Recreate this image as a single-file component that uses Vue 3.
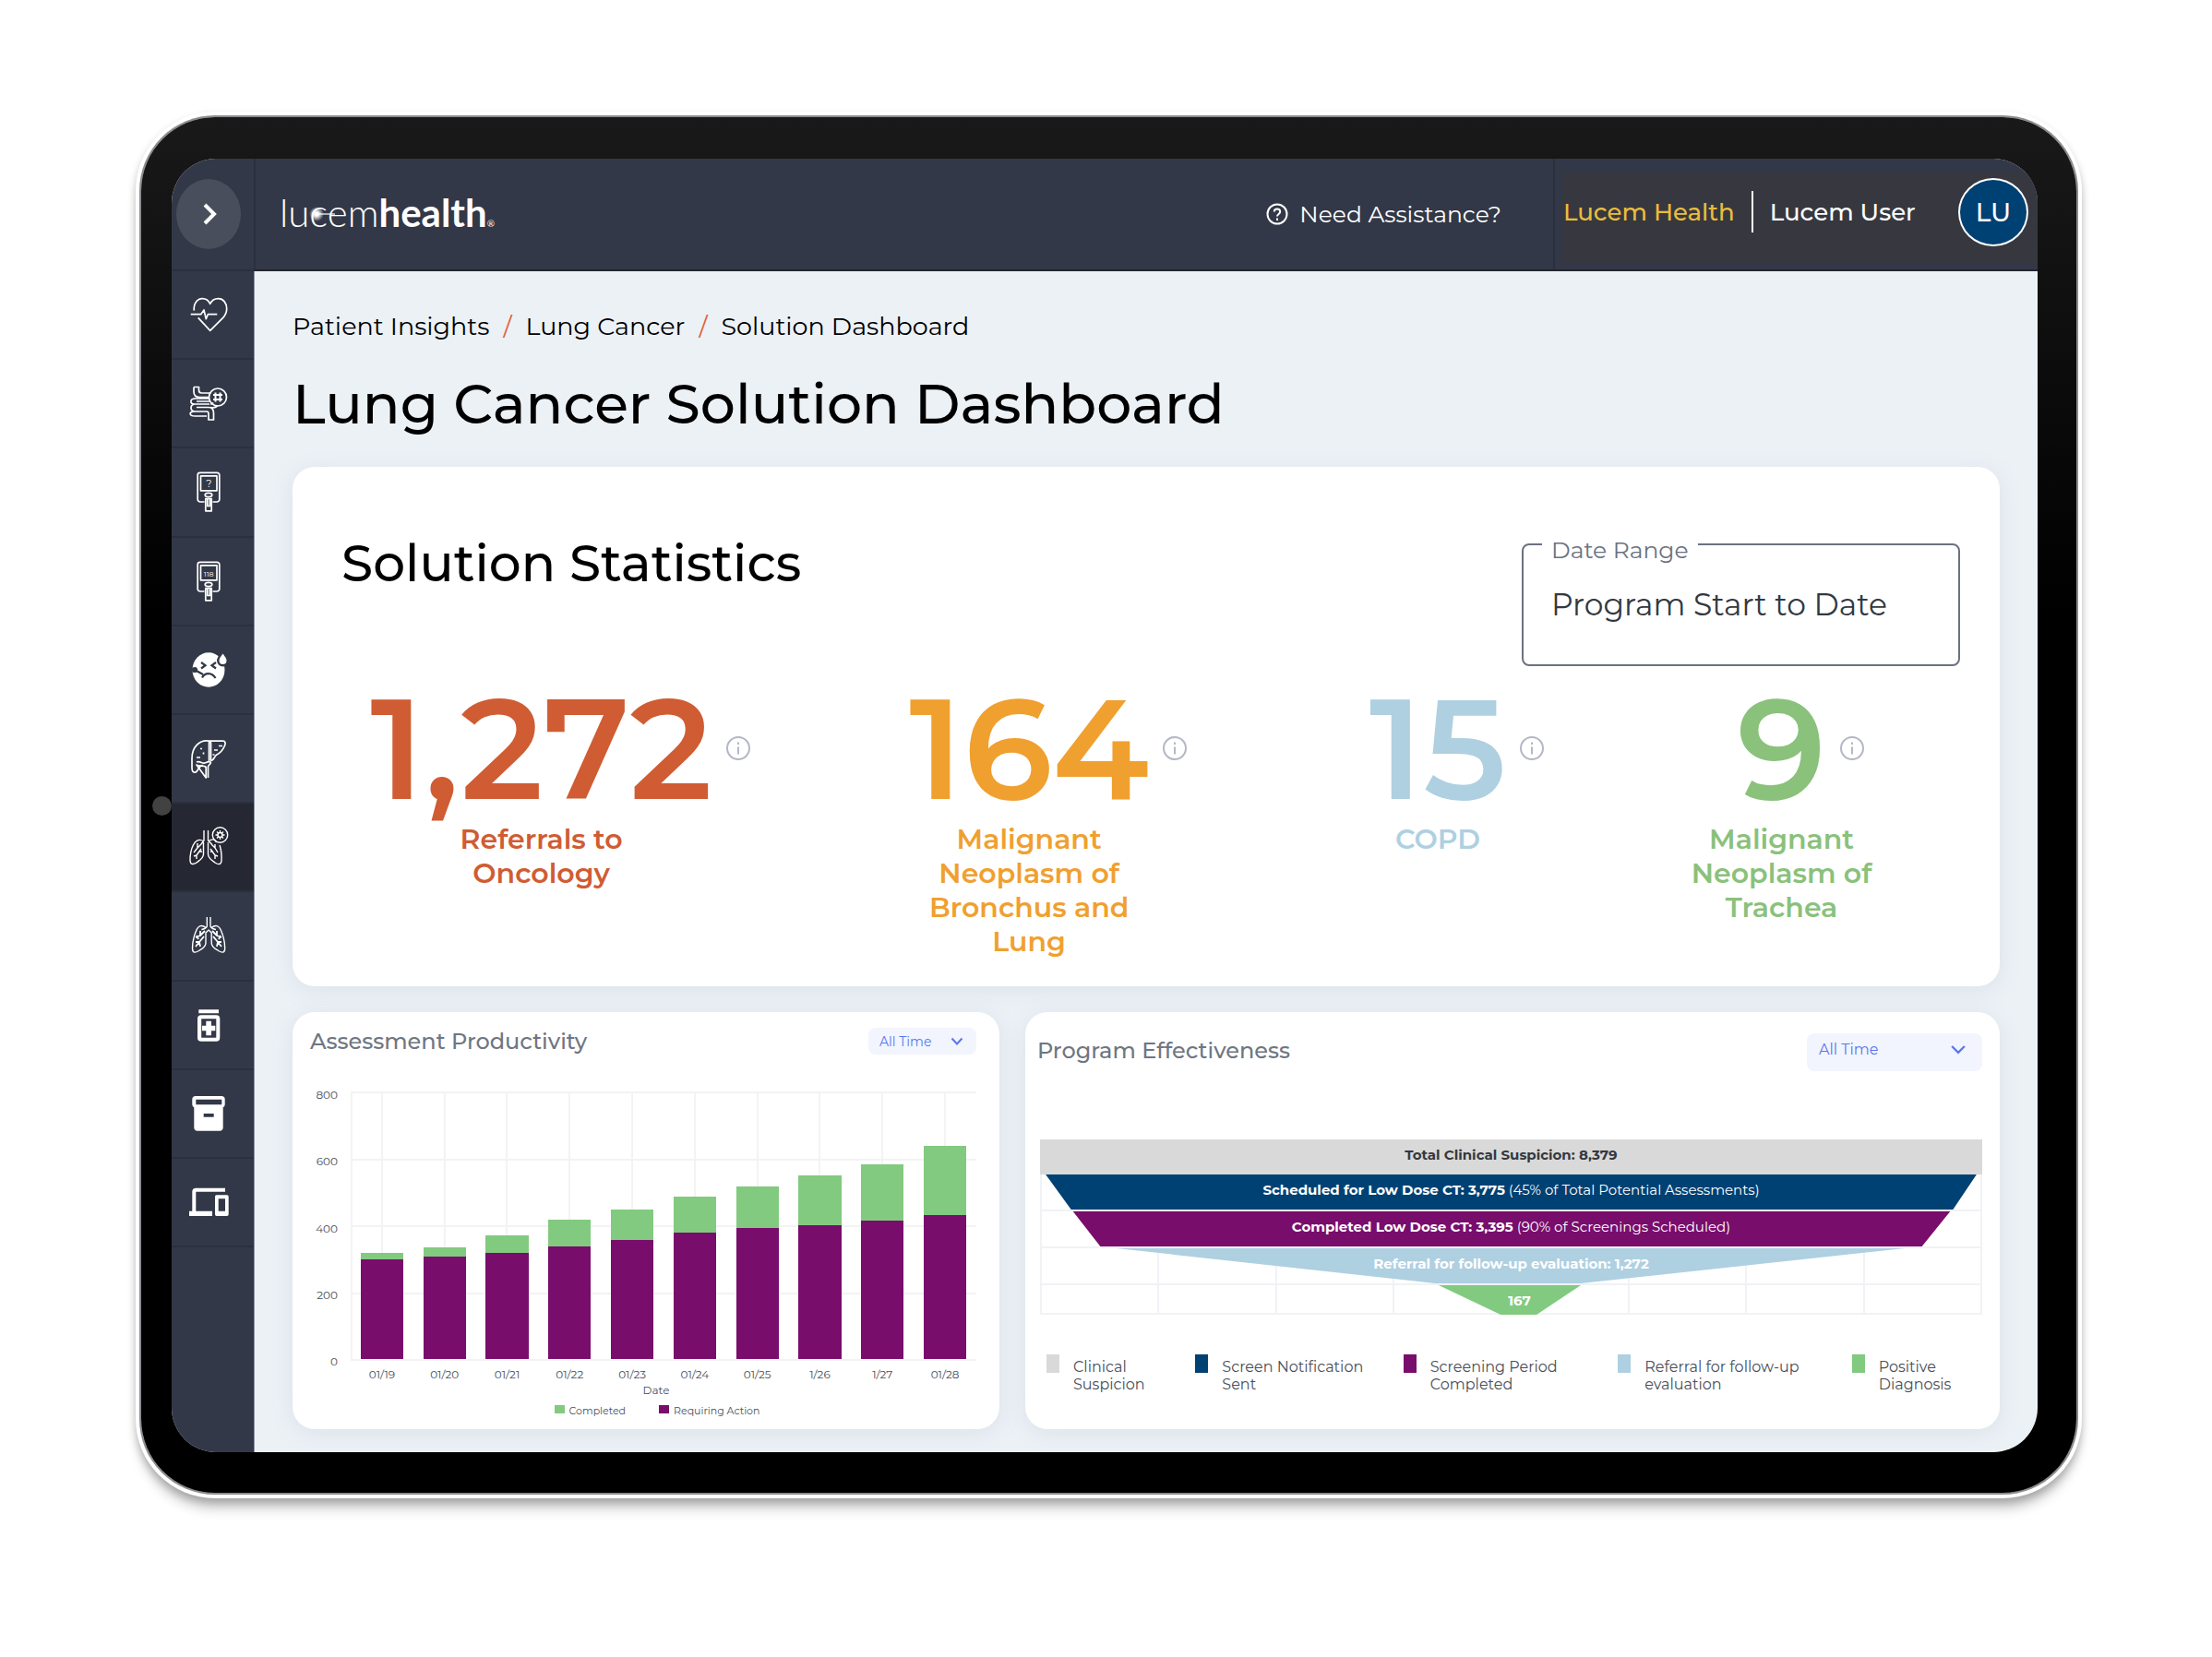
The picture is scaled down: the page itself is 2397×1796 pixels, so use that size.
<script setup>
import { ref } from 'vue'

const navItems = [
  { id: 'heart', label: 'Cardiology' },
  { id: 'colon', label: 'Colorectal' },
  { id: 'glucose', label: 'Undiagnosed diabetes', reading: '?' },
  { id: 'glucose-high', label: 'Diabetes control', reading: '118' },
  { id: 'sick', label: 'Symptoms' },
  { id: 'liver', label: 'Liver' },
  { id: 'lung-cancer', label: 'Lung cancer' },
  { id: 'lungs', label: 'Pulmonary' },
  { id: 'medication', label: 'Medication' },
  { id: 'archive', label: 'Archive' },
  { id: 'devices', label: 'Devices' },
]
const active = ref('lung-cancer')

const stats = [
  { value: '1,272', label: 'Referrals to Oncology', tone: 'rust' },
  { value: '164', label: 'Malignant Neoplasm of Bronchus and Lung', tone: 'amber' },
  { value: '15', label: 'COPD', tone: 'sky' },
  { value: '9', label: 'Malignant Neoplasm of Trachea', tone: 'leaf' },
]

const maxCount = 800
const ticks = [800, 600, 400, 200, 0]
const days = [
  { date: '01/19', action: 298, total: 316 },
  { date: '01/20', action: 305, total: 335 },
  { date: '01/21', action: 317, total: 370 },
  { date: '01/22', action: 337, total: 417 },
  { date: '01/23', action: 356, total: 447 },
  { date: '01/24', action: 378, total: 486 },
  { date: '01/25', action: 391, total: 515 },
  { date: '1/26', action: 401, total: 549 },
  { date: '1/27', action: 413, total: 582 },
  { date: '01/28', action: 430, total: 637 },
]
const share = (n) => `${(n / maxCount) * 100}%`

const funnel = [
  { key: 'suspicion', strong: 'Total Clinical Suspicion: 8,379' },
  { key: 'scheduled', strong: 'Scheduled for Low Dose CT: 3,775', note: '(45% of Total Potential Assessments)' },
  { key: 'completed', strong: 'Completed Low Dose CT: 3,395', note: '(90% of Screenings Scheduled)' },
  { key: 'referral', strong: 'Referral for follow-up evaluation: 1,272' },
  { key: 'positive', strong: '167' },
]
const funnelLegend = [
  { key: 'suspicion', lines: ['Clinical', 'Suspicion'] },
  { key: 'scheduled', lines: ['Screen Notification', 'Sent'] },
  { key: 'completed', lines: ['Screening Period', 'Completed'] },
  { key: 'referral', lines: ['Referral for follow-up', 'evaluation'] },
  { key: 'positive', lines: ['Positive', 'Diagnosis'] },
]
</script>

<template>
  <div class="stage">
    <div class="tablet">
      <span class="camera"></span>
      <div class="screen">
        <aside class="sidebar">
          <div class="toggle-cell">
            <button class="toggle" type="button" aria-label="Expand menu">
              <svg viewBox="0 0 24 24" width="24" height="24"><path d="M8 2l10 10L8 22" fill="none" stroke="#fff" stroke-width="4" /></svg>
            </button>
          </div>
          <nav class="nav" aria-label="Solutions">
            <button
              v-for="item in navItems"
              :key="item.id"
              type="button"
              class="nav-item"
              :class="{ active: item.id === active }"
              :aria-label="item.label"
              @click="active = item.id"
            >
              <svg class="icon" viewBox="0 0 40 40">
                <g v-if="item.id === 'heart'" class="line">
                  <path d="M4.3 15.7C3.5 8 8 2.7 13.3 2.7c3.7 0 6.7 2 8.4 5.6 1.7-3.6 4.7-5.6 8.9-5.6 5.4 0 9.1 4.8 9.1 10.8 0 4-1.6 7.2-4 9.8L21.7 37.3 8.7 23.3" />
                  <path d="M.7 19.7h11L15 15l2.3 9.7 2-5h10" />
                </g>
                <g v-else-if="item.id === 'colon'" class="line">
                  <path d="M4 2.5h5.5v3.500c0 2 1 3 3 3h10M4 2.500v5c0 4 2 6 6 6h11M21 15H5.500c-6 0-6 6-1 6M22 18H7M21 21H5.500c-6 0-6 8 0 8H18c1.500 0 2 1 2 2.500V38h5.500v-7c0-4.500-2-6.500-5.500-6.500H7M22 24.500c5.500 1 7-1 7.500-2M22 21c2 0 2.500-.5 3-1.500M4.500 29c-6 0-6 5 1 5H18" />
                  <circle cx="30" cy="13.500" r="9.500" />
                  <path d="M27.500 8.500v10M32.500 8.500v10M25 11h10M25 16h10" stroke-width="2" />
                </g>
                <g v-else-if="item.id === 'glucose' || item.id === 'glucose-high'" class="line">
                  <path d="M15.500 31H11a2.800 2.800 0 0 1-2.800-2.800V1.800A2.500 2.500 0 0 1 10.700-.7h18.600a2.500 2.500 0 0 1 2.500 2.500v26.400A2.800 2.800 0 0 1 29 31h-4.500" />
                  <rect x="11.500" y="2.800" width="17.500" height="16" />
                  <ellipse cx="20" cy="23.500" rx="3.800" ry="2.200" />
                  <path d="M16.800 27.500h6.400v13.300h-6.400zM18.800 27.500v8h2.600v-8" />
                  <text class="reading" x="20.300" y="14.800" :font-size="item.reading === '?' ? 11 : 8">{{ item.reading }}</text>
                </g>
                <g v-else-if="item.id === 'sick'">
                  <ellipse cx="20" cy="20" rx="17.500" ry="18.800" fill="#fff" />
                  <path fill="#fff" stroke="#323847" stroke-width="5" paint-order="stroke" d="M35.500 2.500c2.600 3.600 4 5.400 4 7.500a4 4 0 0 1-8 0c0-2.100 1.400-3.900 4-7.500z" />
                  <g fill="none" stroke="#323847" stroke-width="2.200">
                    <path d="M12 12l4.500 3.200-4.500 3.300M28 12l-4.500 3.200 4.500 3.300M13 28.500c3-6 11-6 14.500.5M5 20l9 5" />
                    <circle cx="5" cy="20" r="2" fill="#323847" />
                  </g>
                </g>
                <g v-else-if="item.id === 'liver'" class="line">
                  <path d="M20.500 23V1.200C10-.5 2 8 2 20v10c0 6 4 6.500 6 3 1.500-3 2.500-5 6-5.500M20.500 1.200h15c3 0 3 2.500 2 5-2.500 6-5 8-9 10-2.500 1.500-2 6-6.500 6.500M20.500 1.200l2 2v19" />
                  <path d="M7 24c4-1.500 6 2 9 1 2.500-1 3.500-2 6-1 1.500 1-2 3-2.500 5v12M17.200 41V29.500C15.500 27 9 29 7 27z" />
                  <path d="M11 9.500h2M14.500 13.500v2M7 19h4M31 6.500h4M26 11h4M24.500 16h2" />
                </g>
                <g v-else-if="item.id === 'lung-cancer'" class="line thin">
                  <path d="M15 2v11L12 17M19.500 2v11l4 4M15 14C4 7 0 25 0 34c0 6 4 5 7 3 3-2.500 7-4 7.500-9V15M19.500 14C24 11 27 11 28.500 15M32 18c2 6 2.300 12 2 17-.5 5-4 4-7 2-3-2.500-7-4-7.500-9V15" />
                  <path d="M12 17l-4 4v-5M8 21l-4 5M12 22l-5 7-3 1M7 29v4M10 25h3M23 17l4 4v-4M27 21l3 5M22 22l5 7 3 1M27 29v4M25 25h-3" />
                  <circle cx="32.500" cy="7" r="8.200" />
                  <circle cx="32.500" cy="7" r="2.500" />
                  <path d="M32.500 2v3M32.500 9v3M27.500 7h3M34.500 7h3M29 3.500l2 2M34 8.500l2 2M36 3.500l-2 2M31 8.500l-2 2" />
                </g>
                <g v-else-if="item.id === 'lungs'" class="line thin">
                  <path d="M18.300 0v10c-1 3-4 3-6 3.500M22 0v10c1 3 4 3 6 3.500M17 11.500C13 8 9 9 6.500 15 3.500 22 2.500 28 2.500 34c0 5 3 5 7 2.500 3-2 7.500-3.500 7.500-8.500v-11l3.100-3 3.100 3v11c0 5 4.500 6.500 7.500 8.500 4 2.500 7 2.500 7-2.500 0-6-1-12-4-19-2.500-6-6.500-7-10.500-3.500" />
                  <path d="M16 15l-5 5v-5M11 20l-5 2M15 21l-5 6-4 0M10 27l-4 5M10 27l1 5M9 24l-2-4M24 15l5 5v-5M29 20l5 2M25 21l5 6h4M30 27l4 5M30 27l-1 5M31 24l2-4" stroke-width="1.800" />
                </g>
                <g v-else-if="item.id === 'medication'" fill="#fff">
                  <path d="M9.300 3.300H31v4H9.300zM12 9.300h16.300a4 4 0 0 1 4 4v20.400a4 4 0 0 1-4 4H12a4 4 0 0 1-4-4V13.300a4 4 0 0 1 4-4zm.2 4v20.400h16.100V13.300z" fill-rule="evenodd" />
                  <path d="M17.300 15.700h5.700v5h4.300v5.600H23v5h-5.700v-5H13v-5.600h4.300z" />
                </g>
                <path v-else-if="item.id === 'archive'" fill="#fff" fill-rule="evenodd" d="M6 1h28a3.700 3.700 0 0 1 3.700 3.700V10c0 1.500-.8 2.600-2 3.200v21.800a3.700 3.700 0 0 1-3.700 3.700H8A3.700 3.700 0 0 1 4.300 35V13.200c-1.200-.6-2-1.700-2-3.200V4.700A3.700 3.700 0 0 1 6 1zm.3 3.700v5.600h28V4.700zm8.400 15.300v3.700h11V20z" />
                <path v-else fill="#fff" fill-rule="evenodd" d="M6.300 8.700v21H24V35H-1v-5.300h3.300V8.700a4 4 0 0 1 4-4H38v4zM28.600 12.300h11.400a1.700 1.700 0 0 1 1.700 1.700v19.300A1.700 1.700 0 0 1 40 35H28.600a1.700 1.700 0 0 1-1.600-1.700V14a1.700 1.700 0 0 1 1.600-1.700zm2.100 4v13.400h7.300V16.300z" />
              </svg>
            </button>
          </nav>
          <div class="nav-rest"></div>
        </aside>

        <div class="body">
          <header class="topbar">
            <a class="logo" href="#" aria-label="lucemhealth">
              <span class="logo-thin">lucem<i class="spark"></i></span><span class="logo-bold">health</span><span class="logo-mark">®</span>
            </a>
            <a class="assist" href="#">
              <svg viewBox="0 0 24 24" width="24" height="24" fill="none" stroke="#fff" stroke-width="2"><circle cx="12" cy="12" r="10.500" /><path d="M8.800 9.500c0-4 6.400-4 6.400 0 0 2.400-3.200 2.500-3.200 5M12 16.500v2.500" /></svg>
              Need Assistance?
            </a>
            <div class="account">
              <div class="account-panel">
                <span class="org">Lucem Health</span>
                <span class="bar"></span>
                <span class="user">Lucem User</span>
                <button class="avatar" type="button">LU</button>
              </div>
            </div>
          </header>

          <main class="main">
            <nav class="crumbs" aria-label="Breadcrumb">
              <a href="#">Patient Insights</a><span class="slash">/</span><a href="#">Lung Cancer</a><span class="slash">/</span><a href="#">Solution Dashboard</a>
            </nav>
            <h1>Lung Cancer Solution Dashboard</h1>

            <section class="card statistics">
              <div class="statistics-head">
                <h2>Solution Statistics</h2>
                <fieldset class="range">
                  <legend><label for="range">Date Range</label></legend>
                  <select id="range"><option>Program Start to Date</option></select>
                </fieldset>
              </div>
              <div class="stats">
                <div v-for="s in stats" :key="s.label" class="stat" :class="s.tone">
                  <div class="figure">
                    {{ s.value }}
                    <svg class="info" viewBox="0 0 26 26" fill="none" stroke="#b3b8c4" stroke-width="2"><circle cx="13" cy="13" r="12" /><path d="M13 11.500v8M13 6.500v2.500" /></svg>
                  </div>
                  <p>{{ s.label }}</p>
                </div>
              </div>
            </section>

            <div class="lower">
              <section class="card productivity">
                <div class="card-head">
                  <h3>Assessment Productivity</h3>
                  <div class="pick small">
                    <select aria-label="Assessment period"><option>All Time</option></select>
                    <svg viewBox="0 0 14 10" width="14" height="10"><path d="M1.500 1.500L7 7.500l5.500-6" fill="none" stroke="#5b76f0" stroke-width="2" /></svg>
                  </div>
                </div>
                <div class="chart">
                  <div class="y-axis"><span v-for="t in ticks" :key="t">{{ t }}</span></div>
                  <div class="plot-wrap">
                    <div class="plot">
                      <div class="rows"><i v-for="n in 4" :key="n"></i></div>
                      <div v-for="d in days" :key="d.date" class="slot">
                        <div class="bar-stack" :style="{ height: share(d.total) }">
                          <div class="bar-action" :style="{ height: (d.action / d.total) * 100 + '%' }"></div>
                        </div>
                      </div>
                    </div>
                    <div class="x-axis"><span v-for="d in days" :key="d.date">{{ d.date }}</span></div>
                  </div>
                </div>
                <div class="axis-title">Date</div>
                <div class="chart-legend">
                  <span><i class="positive"></i>Completed</span>
                  <span><i class="completed"></i>Requiring Action</span>
                </div>
              </section>

              <section class="card effectiveness">
                <div class="card-head">
                  <h3>Program Effectiveness</h3>
                  <div class="pick large">
                    <select aria-label="Effectiveness period"><option>All Time</option></select>
                    <svg viewBox="0 0 14 10" width="16" height="12"><path d="M1 1.500l6 6 6-6" fill="none" stroke="#5b76f0" stroke-width="2" /></svg>
                  </div>
                </div>
                <div class="funnel">
                  <div class="columns"><i v-for="n in 8" :key="n"></i></div>
                  <div v-for="f in funnel" :key="f.key" class="stage-row" :class="'row-' + f.key">
                    <div class="shape" :class="f.key"></div>
                    <p><b>{{ f.strong }}</b><span v-if="f.note">&nbsp;{{ f.note }}</span></p>
                  </div>
                </div>
                <ul class="funnel-legend">
                  <li v-for="l in funnelLegend" :key="l.key">
                    <i :class="l.key"></i>
                    <span><span v-for="t in l.lines" :key="t" class="text-line">{{ t }}</span></span>
                  </li>
                </ul>
              </section>
            </div>
          </main>
        </div>
      </div>
    </div>
  </div>
</template>

<style>
body {
  background: #fff;
}
</style>

<style scoped>
* {
  box-sizing: border-box;
}
.stage {
  padding: 127px 147px 176px 153px;
  font-family: Montserrat, Inter, 'Liberation Sans', sans-serif;
}
h1,
h2,
h3,
p,
ul {
  margin: 0;
  padding: 0;
}
a {
  color: inherit;
  text-decoration: none;
}
button,
select {
  font: inherit;
  color: inherit;
  border: 0;
  background: none;
  padding: 0;
}
select {
  appearance: none;
}
.tablet {
  position: relative;
  padding: 45px 42px 44px 33px;
  border-radius: 80px;
  background: linear-gradient(#191919, #000 36%);
  box-shadow: 0 0 0 2px #8a8c90, 0 0 0 6px #fff, 0 4px 8px 6px rgba(0, 0, 0, 0.18), 0 14px 14px 2px rgba(0, 0, 0, 0.24);
}
.camera {
  position: absolute;
  left: 12px;
  top: 50%;
  width: 21px;
  height: 21px;
  margin-top: -10px;
  border-radius: 50%;
  background: #424242;
}
.screen {
  display: flex;
  overflow: hidden;
  border-radius: 48px;
  background: #ecf1f6;
}

/* Sidebar */
.sidebar {
  flex: 0 0 89px;
  display: flex;
  flex-direction: column;
  background: #323847;
}
.toggle-cell {
  height: 122px;
  display: flex;
  align-items: center;
  padding-left: 5px;
  border-bottom: 2px solid #2b303e;
}
.toggle {
  width: 70px;
  height: 76px;
  border-radius: 50%;
  background: #484e5c;
  display: grid;
  place-items: center;
}
.nav {
  flex: 62;
  display: flex;
  flex-direction: column;
}
.nav-rest {
  flex: 13;
}
.nav-item {
  flex: 1;
  display: grid;
  place-items: center;
  padding-right: 10px;
  border-bottom: 2px solid #2b303e;
}
.nav-item.active {
  background: #252833;
}
.icon {
  width: 40px;
  height: 40px;
  overflow: visible;
}
.line {
  fill: none;
  stroke: #fff;
  stroke-width: 1.7;
  stroke-linejoin: round;
}
.thin {
  stroke-width: 1.4;
}
.reading {
  fill: #fff;
  stroke: none;
  text-anchor: middle;
}

/* Top bar */
.body {
  flex: 1;
  min-width: 0;
}
.topbar {
  height: 122px;
  display: flex;
  align-items: stretch;
  color: #fff;
  background: #323847;
  border-left: 2px solid #2b303e;
  border-bottom: 2px solid #23262f;
}
.logo {
  display: flex;
  align-items: baseline;
  margin: 28px auto 0 26px;
  font-family: Lato, 'Open Sans', sans-serif;
  font-size: 42px;
  line-height: 60px;
}
.logo-thin {
  position: relative;
  font-weight: 300;
}
.spark {
  position: absolute;
  left: 32px;
  top: 24px;
  width: 16px;
  height: 16px;
  border-radius: 50%;
  background: radial-gradient(#fff 18%, rgba(255, 255, 255, 0) 70%);
}
.spark::after {
  content: '';
  position: absolute;
  left: 8px;
  top: 7px;
  width: 20px;
  height: 2px;
  background: rgba(255, 255, 255, 0.6);
}
.logo-bold {
  font-weight: 700;
}
.logo-mark {
  font-size: 10px;
}
.assist {
  display: flex;
  align-items: center;
  gap: 12px;
  margin-right: 56px;
  font-size: 25px;
}
.account {
  width: 525px;
  padding: 15px 0 6px 8px;
  border-left: 2px solid #2b303e;
}
.account-panel {
  height: 100%;
  display: flex;
  align-items: center;
  padding: 0 10px 14px 1px;
  background: #37383f;
  font-size: 26px;
  font-weight: 500;
}
.org {
  color: #e9bd3e;
}
.bar {
  width: 2px;
  height: 45px;
  margin: 0 18px;
  background: #fff;
}
.avatar {
  width: 76px;
  height: 74px;
  margin-left: auto;
  border: 2px solid #fff;
  border-radius: 50%;
  background: #004173;
  font-size: 28px;
}

/* Page */
.main {
  padding: 40px 41px 25px;
  border-left: 1px solid #8d95a3;
}
.crumbs {
  display: flex;
  line-height: 40px;
  font-size: 27px;
}
.slash {
  margin: 0 15px;
  color: #e0603a;
}
h1 {
  margin: 24px 0 28px;
  line-height: 80px;
  font-size: 60px;
  font-weight: 500;
}
.card {
  background: #fff;
  border-radius: 24px;
  box-shadow: 0 4px 24px rgba(120, 140, 165, 0.14);
}
.statistics {
  padding: 68px 43px 30px 53px;
}
.statistics-head {
  display: flex;
  justify-content: space-between;
}
h2 {
  line-height: 74px;
  font-size: 55px;
  font-weight: 500;
}
.range {
  width: 475px;
  height: 148px;
  margin: 0;
  padding: 24px 16px 0 20px;
  border: 2px solid #6b7280;
  border-radius: 8px;
}
legend {
  padding: 12px 10px 0;
  line-height: 20px;
  font-size: 25px;
  color: #6b7280;
}
.range select {
  width: 100%;
  padding-left: 10px;
  line-height: 50px;
  font-size: 33px;
  color: #343840;
}
.stats {
  display: grid;
  grid-template-columns: 48fr 57fr 31fr 43fr;
  margin: 9px -23px 0 -25px;
}
.stat {
  text-align: center;
  display: flex;
  flex-direction: column;
  align-items: center;
}
.figure {
  position: relative;
  line-height: 160px;
  font-size: 154px;
  font-weight: 600;
}
.info {
  position: absolute;
  left: 100%;
  top: 67px;
  width: 26px;
  height: 26px;
  margin-left: 15px;
}
.stat p {
  max-width: 228px;
  line-height: 37px;
  font-size: 30px;
  font-weight: 600;
}
.rust {
  color: #d05c33;
}
.amber {
  color: #f0a02f;
}
.sky {
  color: #aed0e1;
}
.leaf {
  color: #8ac17b;
}

/* Lower cards */
.lower {
  display: grid;
  grid-template-columns: 383fr 528fr;
  gap: 28px;
  margin-top: 28px;
}
.card-head {
  display: flex;
  justify-content: space-between;
}
h3 {
  line-height: 34px;
  font-size: 24px;
  font-weight: 500;
  color: #6f7682;
}
.pick {
  position: relative;
  border-radius: 8px;
  background: #f2f4fe;
  color: #5b76f0;
}
.pick select {
  width: 100%;
  height: 100%;
}
.pick svg {
  position: absolute;
  right: 14px;
  top: 10px;
}
.small {
  width: 117px;
  height: 29px;
  margin-top: 2px;
  font-size: 14px;
}
.small select {
  padding-left: 12px;
}
.large {
  width: 190px;
  height: 41px;
  margin-top: -2px;
  font-size: 16px;
}
.large select {
  padding: 0 0 7px 13px;
}
.large svg {
  right: 18px;
  top: 12px;
}
.productivity {
  padding: 15px 25px 12px 19px;
  font-size: 12px;
  color: #4a4e57;
}
.chart {
  display: flex;
  gap: 14px;
  margin-top: 37px;
}
.y-axis {
  flex: 0 0 30px;
  display: flex;
  flex-direction: column;
  justify-content: space-between;
  align-items: flex-end;
  margin: -4px 0 14px;
  line-height: 16px;
}
.plot-wrap {
  flex: 1;
}
.plot {
  position: relative;
  display: flex;
  height: 292px;
  border-bottom: 2px solid #f3f3f4;
}
.rows {
  position: absolute;
  inset: 0;
  display: flex;
  flex-direction: column;
  border-left: 2px solid #f3f3f4;
}
.rows i {
  flex: 1;
  border-top: 2px solid #f3f3f4;
}
.slot {
  position: relative;
  flex: 1;
  display: flex;
  align-items: flex-end;
  justify-content: center;
  background: linear-gradient(#f3f3f4, #f3f3f4) center / 2px 100% no-repeat;
}
.bar-stack {
  width: 68%;
  display: flex;
  align-items: flex-end;
  background: #82ca80;
}
.bar-action {
  width: 100%;
  background: #780d6c;
}
.x-axis {
  display: flex;
  line-height: 16px;
  padding-top: 7px;
  text-align: center;
}
.x-axis span {
  flex: 1;
}
.axis-title {
  margin-top: 1px;
  padding-left: 28px;
  line-height: 16px;
  text-align: center;
}
.chart-legend {
  display: flex;
  justify-content: center;
  gap: 36px;
  margin-top: 6px;
  padding-left: 30px;
  line-height: 16px;
  font-size: 11px;
}
.chart-legend span {
  display: flex;
  gap: 5px;
}
.chart-legend i {
  width: 11px;
  height: 9px;
  margin-top: 2px;
}
.effectiveness {
  padding: 25px 19px 0 13px;
}
.funnel {
  position: relative;
  margin: 74px 0 0 3px;
  color: #fff;
  font-size: 15px;
  text-align: center;
}
.columns {
  position: absolute;
  inset: 0;
  display: flex;
  border: solid #f1f2f6;
  border-width: 0 2px 2px 0;
}
.columns i {
  flex: 1;
  border-left: 2px solid #f1f2f6;
}
.stage-row {
  position: relative;
  height: 40px;
  border-bottom: 2px solid #f1f2f6;
}
.shape {
  position: absolute;
  inset: 0;
}
.stage-row p {
  position: relative;
  line-height: 34px;
}
.suspicion {
  background: #d9d9d9;
}
.scheduled {
  background: #004173;
}
.completed {
  background: #780d6c;
}
.referral {
  background: #aed0e1;
}
.positive {
  background: #82ca80;
}
.row-suspicion {
  height: 38px;
  border: 0;
  color: #343840;
}
.row-positive {
  height: 32px;
  border: 0;
}
.row-positive p {
  padding-left: 18px;
}
.shape.scheduled {
  clip-path: polygon(0.6% 0, 99.4% 0, 96.9% 100%, 3.3% 100%);
}
.shape.completed {
  clip-path: polygon(3.5% 0, 96.6% 0, 93.6% 100%, 6.4% 100%);
}
.shape.referral {
  clip-path: polygon(8.1% 0, 91.8% 0, 57.4% 100%, 41.9% 100%);
}
.shape.positive {
  clip-path: polygon(42.3% 0, 57.4% 0, 52.7% 100%, 48.9% 100%);
}
.funnel-legend {
  display: grid;
  grid-template-columns: 161fr 225fr 232fr 253fr 141fr;
  margin: 43px 0 0 10px;
  list-style: none;
  line-height: 19px;
  font-size: 16px;
  color: #4a4e57;
}
.funnel-legend li {
  display: flex;
  gap: 15px;
}
.funnel-legend i {
  width: 14px;
  height: 20px;
}
.funnel-legend span {
  padding-top: 4px;
}
.funnel-legend .text-line {
  display: block;
  padding: 0;
  white-space: nowrap;
}
</style>
